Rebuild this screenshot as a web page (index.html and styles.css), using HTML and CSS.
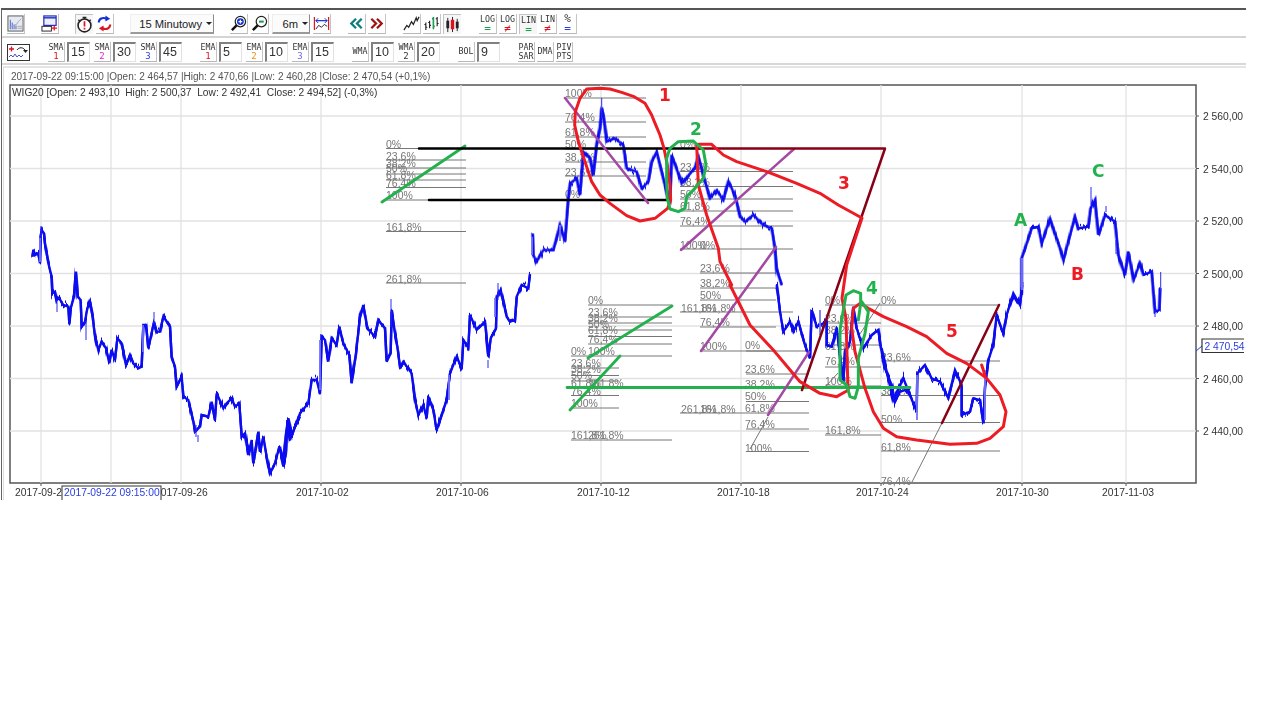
FILE: index.html
```html
<!DOCTYPE html>
<html lang="pl">
<head>
<meta charset="utf-8">
<title>WIG20</title>
<link rel="stylesheet" href="styles.css">
</head>
<body>
<div class="app">
  <div class="toolbar row1">
    <div class="grp">
      <div class="btn raised"><svg viewBox="0 0 18 18"><rect x="1" y="1" width="16" height="16" fill="#e8eaf2" stroke="#555"/><path d="M3 5h1v10H3zM5 8h1v7H5zM7 10h1v5H7zM9 11h1v4H9z" fill="#4a5fd0"/><path d="M3 13l4-2 3-1 2-3 3-3" fill="none" stroke="#9aa" stroke-width="1"/><path d="M11 12h5M11 14h5" stroke="#aaa"/></svg></div>
    </div>
    <div class="grp">
      <div class="btn raised"><svg viewBox="0 0 18 18"><rect x="3" y="1" width="13" height="10" fill="#eef" stroke="#2233bb" stroke-width="1.3"/><path d="M3 3h13" stroke="#2233bb" stroke-width="1.5"/><rect x="1" y="12" width="10" height="5" fill="#fff" stroke="#222"/><path d="M11 14h6M14 11.500v5" stroke="#e01020" stroke-width="1.300"/></svg></div>
    </div>
    <div class="grp wide">
      <div class="btn sunken"><svg viewBox="0 0 18 18"><circle cx="9" cy="10" r="6.800" fill="#fff" stroke="#222" stroke-width="1.700"/><path d="M7 1.500h4M9 1.500v2M2.500 4l2 2M15.500 4l-2 2" stroke="#222" stroke-width="1.500"/><path d="M9 5.500v5.500M9 12.500v1.700" stroke="#e01020" stroke-width="1.800"/></svg></div>
      <div class="btn raised"><svg viewBox="0 0 18 18"><path d="M3 8c0-4 4-6 8-4" fill="none" stroke="#1530d0" stroke-width="2.200"/><path d="M10 0.500l5 3.500-5 3z" fill="#1530d0"/><path d="M15 10c0 4-4 6-8 4" fill="none" stroke="#d81820" stroke-width="2.200"/><path d="M8 17.500l-5-3.500 5-3z" fill="#d81820"/></svg></div>
    </div>
    <div class="select long">15 Minutowy<span class="caret"></span></div>
    <div class="grp wide">
      <div class="btn raised"><svg viewBox="0 0 18 18"><circle cx="11" cy="7" r="5.500" fill="#fff" stroke="#222" stroke-width="1.300"/><circle cx="11" cy="7" r="3.600" fill="#1530d0"/><path d="M9 7h4M11 5v4" stroke="#fff" stroke-width="1.200"/><path d="M7 11l-5 5" stroke="#111" stroke-width="2.600"/></svg></div>
      <div class="btn raised"><svg viewBox="0 0 18 18"><circle cx="11" cy="7" r="5.500" fill="#fff" stroke="#222" stroke-width="1.300"/><path d="M8.500 7h5" stroke="#18a050" stroke-width="2.200"/><path d="M7 11l-5 5" stroke="#111" stroke-width="2.600"/></svg></div>
      <div class="select short">6m<span class="caret"></span></div>
      <div class="btn raised"><svg viewBox="0 0 18 18"><path d="M1.500 2v14M16.500 2v14" stroke="#d81820" stroke-width="1.300"/><path d="M3 6h12" stroke="#1530d0" stroke-width="1.300"/><path d="M5.500 3.500L3 6l2.500 2.500M12.500 3.500L15 6l-2.500 2.500" fill="none" stroke="#1530d0"/><path d="M3 15l3-4 3 2 3-3 3 2" fill="none" stroke="#222"/></svg></div>
    </div>
    <div class="grp shift">
      <div class="btn raised"><svg viewBox="0 0 18 18"><path d="M8.500 4l-5 5 5 5M14.500 4l-5 5 5 5" fill="none" stroke="#0b7d7d" stroke-width="2.400"/></svg></div>
      <div class="btn raised"><svg viewBox="0 0 18 18"><path d="M3.500 4l5 5-5 5M9.500 4l5 5-5 5" fill="none" stroke="#a01212" stroke-width="2.400"/></svg></div>
    </div>
    <div class="grp shift">
      <div class="btn raised"><svg viewBox="0 0 18 18"><path d="M1 16l3-5 2 2 3-6 2 3 3-7 1 3 2-4" fill="none" stroke="#222" stroke-width="1.300"/></svg></div>
      <div class="btn raised"><svg viewBox="0 0 18 18"><path d="M3 8v8M1.500 10h1.500M3 13h1.500M7 6v8M5.500 8h1.500M7 11h1.500M15 2v10M13.500 4h1.500M15 9h1.500" stroke="#222" stroke-width="1.200"/><path d="M11 2v13M9.500 4h1.500M11 12h1.500" stroke="#16a050" stroke-width="1.700"/></svg></div>
      <div class="btn sunken"><svg viewBox="0 0 18 18"><path d="M4 2v15M9 1v16M14 3v13" stroke="#222"/><rect x="2.500" y="5" width="3" height="8" fill="#222"/><rect x="7.200" y="4" width="3.600" height="10" fill="#e01020"/><rect x="12.500" y="6" width="3" height="7" fill="#222"/></svg></div>
    </div>
    <div class="grp shift2">
      <div class="btn raised txt"><span>LOG</span><b class="c-green">=</b></div>
      <div class="btn raised txt"><span>LOG</span><b class="c-red">≠</b></div>
      <div class="btn sunken txt"><span>LIN</span><b class="c-green">=</b></div>
      <div class="btn raised txt"><span>LIN</span><b class="c-red">≠</b></div>
      <div class="btn raised txt"><span class="pct">%</span><b class="c-blue">=</b></div>
    </div>
  </div>
  <div class="toolbar row2">
    <div class="btn raised tool"><svg viewBox="0 0 23 17"><rect x="0.500" y="0.500" width="22" height="16" fill="#fff" stroke="#333"/><path d="M2 13l2-2 2 2 2-3 2 3 2-2 2 2 2-2" fill="none" stroke="#4455cc"/><path d="M2 5h5M4.500 2.500v5" stroke="#e01020" stroke-width="1.300"/><path d="M10 6c2-3 6-3 8 0" fill="none" stroke="#222"/><path d="M16 6h5l-2.500 3z" fill="#222"/></svg></div>
    <div class="grp pairs">
      <div class="pair"><div class="btn raised ind"><span>SMA</span><b class="c-red">1</b></div><div class="input">15</div></div>
      <div class="pair"><div class="btn raised ind"><span>SMA</span><b class="c-magenta">2</b></div><div class="input">30</div></div>
      <div class="pair"><div class="btn raised ind"><span>SMA</span><b class="c-blue">3</b></div><div class="input">45</div></div>
    </div>
    <div class="grp pairs">
      <div class="pair"><div class="btn raised ind"><span>EMA</span><b class="c-red">1</b></div><div class="input">5</div></div>
      <div class="pair"><div class="btn raised ind"><span>EMA</span><b class="c-orange">2</b></div><div class="input">10</div></div>
      <div class="pair"><div class="btn raised ind"><span>EMA</span><b class="c-violet">3</b></div><div class="input">15</div></div>
    </div>
    <div class="grp pairs">
      <div class="pair"><div class="btn raised ind"><span>WMA</span></div><div class="input">10</div></div>
      <div class="pair"><div class="btn raised ind"><span>WMA</span><b class="c-dark">2</b></div><div class="input">20</div></div>
    </div>
    <div class="grp pairs">
      <div class="pair"><div class="btn raised ind"><span>BOL</span></div><div class="input">9</div></div>
    </div>
    <div class="grp">
      <div class="btn raised ind"><span>PAR</span><span>SAR</span></div>
      <div class="btn raised ind"><span>DMA</span></div>
      <div class="btn raised ind"><span>PIV</span><span>PTS</span></div>
    </div>
  </div>
  <div class="main">
    <div class="status">2017-09-22 09:15:00 |Open: 2 464,57 |High: 2 470,66 |Low: 2 460,28 |Close: 2 470,54 (+0,1%)</div>
    <svg class="chart" viewBox="4 84 1241 416">
      <defs>
        <filter id="rough" x="-2%" y="-5%" width="104%" height="110%" color-interpolation-filters="sRGB">
          <feTurbulence type="fractalNoise" baseFrequency="0.55 0.012" numOctaves="2" seed="7" result="noise"/>
          <feColorMatrix in="noise" type="matrix" values="0 0 0 0 .5  0 1 0 0 0  0 0 0 0 .5  0 0 0 0 1" result="shift"/>
          <feDisplacementMap in="SourceGraphic" in2="shift" scale="13" xChannelSelector="R" yChannelSelector="G" result="jag"/>
          <feMerge><feMergeNode in="jag"/><feMergeNode in="SourceGraphic"/></feMerge>
        </filter>
      </defs>
      <rect class="plot" x="10" y="85" width="1186" height="398"/>
      <path class="grid" d="M10 116H1196M10 168.500H1196M10 221H1196M10 273.500H1196M10 326H1196M10 378.500H1196M10 431H1196M41 85V483M111 85V483M181 85V483M321 85V483M461 85V483M601 85V483M741 85V483M881 85V483M1022 85V483M1126 85V483"/>
      <text class="legend" x="12" y="96">WIG20 [Open: 2 493,10  High: 2 500,37  Low: 2 492,41  Close: 2 494,52] (-0,3%)</text>

      <path class="fib" d="M386 148.500H466M386 160H466M386 168H466M386 174H466M386 180H466M386 187.500H466M386 200H466M386 231.500H466M386 283H466"/>
      <path class="fib" d="M565 98H646M565 122H646M565 137H646M565 149H646M565 162H646M565 176H646M565 200H646"/>
      <path class="fib" d="M680 171.500H793M680 186.500H793M680 199H793M680 211H793M680 226H793M680 249H793M680 312H793M680 413H809"/>
      <path class="fib" d="M700 273H776M700 288H776M700 300H776M700 327H776M700 351H776"/>
      <path class="fib" d="M746 351H809M746 374H809M746 388H809M746 401.500H809M746 429H809M746 451.500H809M750 449L768 417"/>
      <path class="fib" d="M588 305H672M588 317H672M588 323H672M588 330H672M588 336.500H672M588 344H672M571 356H672"/>
      <path class="fib" d="M571 368H619M571 375.500H619M571 381H619M571 395.500H619M571 408H619M571 440H672"/>
      <path class="fib" d="M825 305H881M825 323H881M825 345H881M825 367H881M825 386H881M825 435H881M826 386L838 373M858 337L880 303"/>
      <path class="fib" d="M881 305H1000M881 361H1000M881 395.500H1000M881 422.500H1000M881 451H1000M912 482L942 423"/>
      <g class="fib-label">
        <text x="386" y="148">0%</text><text x="386" y="160">23,6%</text><text x="386" y="167">38,2%</text><text x="386" y="172">50%</text><text x="386" y="179">61,8%</text><text x="386" y="187">76,4%</text><text x="386" y="199">100%</text><text x="386" y="231">161,8%</text><text x="386" y="283">261,8%</text>
        <text x="565" y="97">100%</text><text x="565" y="121">76,4%</text><text x="565" y="136">61,8%</text><text x="565" y="148">50%</text><text x="565" y="161">38,2%</text><text x="565" y="176">23,6%</text><text x="565" y="198">0%</text>
        <text x="680" y="148">0%</text><text x="680" y="171">23,6%</text><text x="680" y="186">38,2%</text><text x="680" y="198">50%</text><text x="680" y="210">61,8%</text><text x="680" y="225">76,4%</text><text x="680" y="249">100%</text><text x="700" y="249">0%</text><text x="681" y="312">161,8%</text><text x="700" y="312">161,8%</text><text x="681" y="413">261,8%</text><text x="700" y="413">161,8%</text>
        <text x="700" y="272">23,6%</text><text x="700" y="287">38,2%</text><text x="700" y="299">50%</text><text x="700" y="326">76,4%</text><text x="700" y="350">100%</text>
        <text x="745" y="349">0%</text><text x="745" y="373">23,6%</text><text x="745" y="388">38,2%</text><text x="745" y="400">50%</text><text x="745" y="412">61,8%</text><text x="745" y="428">76,4%</text><text x="745" y="452">100%</text>
        <text x="588" y="304">0%</text><text x="588" y="316">23,6%</text><text x="588" y="322">38,2%</text><text x="588" y="328">50%</text><text x="588" y="334">61,8%</text><text x="588" y="343">76,4%</text><text x="588" y="355">100%</text>
        <text x="571" y="355">0%</text><text x="571" y="367">23,6%</text><text x="571" y="373">38,2%</text><text x="571" y="379">50%</text><text x="571" y="387">61,8%</text><text x="588" y="387">161,8%</text><text x="571" y="395">76,4%</text><text x="571" y="407">100%</text><text x="571" y="439">161,8%</text><text x="588" y="439">261,8%</text>
        <text x="825" y="304">0%</text><text x="825" y="322">23,6%</text><text x="825" y="334">38,2%</text><text x="825" y="350">61,8%</text><text x="825" y="365">76,4%</text><text x="825" y="385">100%</text><text x="825" y="434">161,8%</text>
        <text x="881" y="304">0%</text><text x="881" y="361">23,6%</text><text x="881" y="395">38,2%</text><text x="881" y="423">50%</text><text x="881" y="451">61,8%</text><text x="881" y="485">76,4%</text>
      </g>

      <g class="price">
      <g class="series" transform="translate(0 200) scale(.33333)">
        <path d="M97 170L100 150 105 165 115 160 120 190 122 110 125 90 132 100 135 130 140 160 145 190 155 230 157 280 165 275 170 300 178 295 190 315 205 320 208 370 212 325 222 290 228 215 233 290 242 300 245 380 255 365 262 325 270 305 278 350 285 410 295 450 305 425 318 445 328 490 335 450 345 480 352 415 365 430 378 495 390 465 400 490 415 505 425 500 430 375 438 375 445 445 455 400 462 365 470 395 480 395 490 350 510 380 515 470 525 500 530 560 545 530 550 590 565 600 580 665 585 695 600 680 605 645 625 650 635 605 645 660 650 580 670 625 680 610 695 595 705 620 718 610 725 710 735 700 745 765 755 720 760 790 775 695 780 755 790 710 800 770 810 820 825 790 838 740 850 790 858 700 865 655 875 710 885 680 900 650"/>
      </g>
      <g class="series" transform="translate(280 240) scale(.33333)">
        <path d="M0 620L10 680 18 640 22 540 30 600 45 560 60 520 85 490 95 420 110 420 120 460 125 290 135 300 145 365 155 295 170 315 178 260 190 310 208 345 215 430 228 340 240 230 250 195 262 265 285 290 295 240 315 265 320 365 332 340 335 210 345 280 352 320 360 380 370 365 395 400 405 480 415 525 430 495 440 535 445 470 460 510 470 570 490 510 500 480 510 400 530 350 545 385 550 300 565 320 570 225 590 270 615 245 625 350 632 295 648 265 650 175 662 150 680 230 690 245 705 240 710 170 725 135 745 145 750 105"/>
      </g>
      <g class="series" transform="translate(370 85) scale(.33333)">
        <path d="M488 445L490 510 500 530 520 495 550 495 570 420 585 470 590 405 595 340 600 295 620 280 630 330 640 200 660 220 670 270 680 180 690 130 695 70 700 90 710 170 735 160 760 180 770 250 800 260 815 310 835 290 845 230 860 200 885 300 900 350 905 210 935 295 960 265 975 250 985 215 1005 290 1020 340 1040 315 1060 345 1075 290 1095 330 1110 395 1125 410 1150 390 1180 420 1205 430 1215 490 1220 555 1235 600"/>
      </g>
      <g class="series" transform="translate(560 285) scale(.33333)">
        <path d="M650 0L660 80 670 140 690 110 700 140 715 110 735 180 750 220 755 75 770 125 800 110 800 180 815 185 830 130 850 290 855 200 870 170 880 65 890 130 910 190 935 150 955 135 965 200 975 250 995 300 1005 350 1020 320 1050 310"/>
      </g>
      <g class="series" transform="translate(800 285) scale(.33333)">
        <path d="M245 190L260 260 280 345 310 280 330 330 350 380 352 265 375 240 395 280 420 290 445 340 465 255 485 300 485 390 510 380 520 340 540 345 550 415 555 310 565 225 580 180 590 90 610 145 620 90 640 25 660 60 667 0"/>
      </g>
      <g class="series" transform="translate(1000 85) scale(.33333)">
        <path d="M65 630L65 520 82 470 95 430 115 425 125 475 150 400 180 490 190 525 210 450 225 395 235 430 265 425 272 370 285 345 295 450 315 390 345 410 355 510 375 570 385 500 400 585 420 535 430 570 455 560 465 680 478 675 480 610"/>
      </g>
      </g>
      <path class="wick" d="M601.700 98V118M1091 187V205M1160.700 272V292M41 226V240M86 321V340M57 300V312M154 312V324M196 425V437M198 435V442M391 299V327M488 360V368M498 283V300M1106 206V212M1116 240V254M1155 310V317"/>
      <path class="hollow" d="M143 325V352M40 238V262M320 340V390M449 375V400M495 298V317M1022 258V290M820 310V335M917 375V420M985 370V420M560 225V241M532 237V255"/>

      <g class="sketch">
        <path class="green-line" d="M382 202L465 146M588 358L672 306M570 410L620 356M567 387.500H910"/>
        <path class="black-line" d="M419 148.500H700M429 200H670"/>
        <path class="purple-line" d="M565 98L648 203M681 250L794 149M701 351L776 247M768 415L809 352"/>
        <path class="maroon-line" d="M696 148.500H885L802 390M942 423L999 305"/>
      </g>
      <g class="sketch" transform="translate(370 85) scale(.33333)">
        <path class="red-curve" d="M650 12L690 10 720 12 755 22 790 34 825 55 845 90 853 110 870 150 882 190 892 240 900 300 902 345 893 370 855 400 810 408 770 392 720 355 690 330 665 290 645 230 625 170 614 120 616 80 630 40Z"/>
        <path class="red-curve" d="M985 178H1025L1060 210 1100 230 1190 260 1280 295 1350 325 1405 360 1476 399 1430 540 1416 640 1428 700 1434 915"/>
        <path class="red-curve" d="M980 180L985 300 1010 390 1045 490 1050 530 1085 600"/>
        <path class="green-curve" d="M925 170L970 168 1000 195 1008 240 1000 280 975 310 950 335 945 370 925 380 900 372 892 340 890 290 890 220 900 190Z"/>
      </g>
      <g class="sketch" transform="translate(560 285) scale(.33333)">
        <path class="red-curve" d="M510 0L570 120 640 195 720 290 780 325 830 335 860 318"/>
      </g>
      <g class="sketch" transform="translate(800 285) scale(.33333)">
        <path class="red-curve" d="M160 70L180 55 205 70 250 95 320 125 380 155 440 205 500 235 560 280 600 330 618 380 610 425 570 460 530 475 450 478 350 465 290 455 250 430 220 380 195 310 165 200 155 130ZM545 240L555 270"/>
      </g>
      <g class="sketch" transform="translate(790 270) scale(.33333)">
        <path class="green-curve" d="M215 95L235 125 225 190 205 265 205 350 195 385 180 380 170 345 150 330 150 180 160 120 168 75 190 62 212 70 212 100 205 150"/>
      </g>
      <g class="mark">
        <text class="c-red" x="659" y="101">1</text>
        <text class="c-green" x="690" y="135">2</text>
        <text class="c-red" x="838" y="189">3</text>
        <text class="c-green" x="866" y="294">4</text>
        <text class="c-red" x="946" y="337">5</text>
        <text class="c-green" x="1014" y="226">A</text>
        <text class="c-red" x="1071" y="280">B</text>
        <text class="c-green" x="1092" y="177">C</text>
      </g>

      <path class="tick" d="M1196 116h3M1196 168.500h3M1196 221h3M1196 273.500h3M1196 326h3M1196 378.500h3M1196 431h3M41 483v3M321 483v3M461 483v3M601 483v3M741 483v3M881 483v3M1022 483v3M1126 483v3"/>
      <g class="axis">
        <text x="1203" y="120">2 560,00</text><text x="1203" y="172.500">2 540,00</text><text x="1203" y="225">2 520,00</text><text x="1203" y="277.500">2 500,00</text><text x="1203" y="330">2 480,00</text><text x="1203" y="382.500">2 460,00</text><text x="1203" y="435">2 440,00</text>
        <text x="15" y="496">2017-09-25</text><text x="155" y="496">2017-09-26</text><text x="296" y="496">2017-10-02</text><text x="436" y="496">2017-10-06</text><text x="577" y="496">2017-10-12</text><text x="717" y="496">2017-10-18</text><text x="856" y="496">2017-10-24</text><text x="996" y="496">2017-10-30</text><text x="1102" y="496">2017-11-03</text>
      </g>
      <rect class="tip" x="62" y="486" width="99" height="16"/>
      <text class="tip-text" x="64" y="496">2017-09-22 09:15:00</text>
      <path class="cursor" d="M1196 351L1202 346"/>
      <path class="price-box" d="M1244 339H1202V352.500H1244"/>
      <text class="tip-text" x="1204.500" y="350">2 470,54</text>
    </svg>
  </div>
</div>
</body>
</html>
```
FILE: styles.css
```css
html, body {
  margin: 0;
  padding: 0;
  background: #fff;
}
body {
  height: 720px;
  overflow: hidden;
  font-family: "Liberation Sans", Arial, sans-serif;
  color: #333;
}
.app {
  width: 1244px;
  margin-top: 8px;
  margin-left: 1px;
  height: 490px;
  border-top: 2px solid #555;
  border-left: 1px solid #666;
  filter: blur(.3px);
  overflow: hidden;
}
.toolbar {
  display: flex;
  align-items: center;
  gap: 16px;
  padding-left: 5px;
  box-sizing: border-box;
}
.row1 {
  border-bottom: 2px solid #d4d4d4;
  height: 28px;
  padding-top: 2px;
}
.row2 {
  gap: 18px;
  height: 27px;
  padding-top: 3px;
  border-bottom: 2px solid #d8d8d8;
}
.grp {
  display: flex;
  align-items: center;
  gap: 2px;
}
.grp.wide { gap: 3px; }
.grp.shift { margin-left: 1px; }
.grp.shift2 { margin-left: 2px; }
.pairs { gap: 4px; }
.pair {
  display: flex;
  align-items: center;
  gap: 2px;
}
.btn {
  width: 18px;
  height: 20px;
  box-sizing: border-box;
  display: flex;
  flex-direction: column;
  align-items: center;
  justify-content: center;
  background: #fff;
}
.btn svg { width: 17px; height: 17px; display: block; }
.raised {
  border-right: 1px solid #c4c4c4;
  border-bottom: 1px solid #b8b8b8;
}
.sunken {
  border-top: 1px solid #c4c4c4;
  border-left: 1px solid #c4c4c4;
  background: #f6f6f6;
}
.tool { width: 23px; height: 18px; border: 0; }
.tool svg { width: 23px; height: 17px; }
.select {
  box-sizing: border-box;
  height: 20px;
  display: flex;
  align-items: center;
  justify-content: flex-end;
  gap: 4px;
  padding-right: 1px;
  font-size: 11.200px;
  color: #222;
  background: #fbfbfb;
  border-right: 1px solid #8a8a8a;
  border-bottom: 2px solid #9a9a9a;
  border-top: 1px solid #eee;
  border-left: 1px solid #eee;
}
.select.long { width: 84px; }
.select.short { width: 38px; }
.caret {
  width: 0;
  height: 0;
  border-left: 3px solid transparent;
  border-right: 3px solid transparent;
  border-top: 3px solid #222;
}
.txt, .ind {
  font-family: "DejaVu Sans Mono", monospace;
  font-size: 8.300px;
  line-height: 9px;
  color: #333;
}
.ind { width: 17px; }
.txt span, .ind span { display: block; }
.txt b, .ind b { display: block; font-weight: normal; font-size: 9px; }
.txt b { font-size: 11px; line-height: 9px; }
.pct { font-size: 11px; line-height: 10px; }
.input {
  box-sizing: border-box;
  width: 23px;
  height: 20px;
  border-top: 2px solid #808080;
  border-left: 2px solid #808080;
  border-right: 1px solid #e2e2e2;
  border-bottom: 1px solid #e2e2e2;
  padding-left: 2px;
  font-size: 12.500px;
  line-height: 17px;
  color: #333;
  background: #fff;
}
.c-red { color: #e01020; fill: #ed1c24; }
.c-green { color: #16a34a; fill: #22b14c; }
.c-blue { color: #2a3ee0; }
.c-magenta { color: #e020d0; }
.c-orange { color: #f08a10; }
.c-violet { color: #6a6af0; }
.c-dark { color: #333; }
.main {
  border-left: 1px solid #ddd;
  margin-left: 1px;
  border-top: 2px solid #e4e4e4;
  margin-top: 1px;
}
.status {
  height: 16px;
  padding-left: 7px;
  padding-top: 1px;
  box-sizing: border-box;
  font-size: 10px;
  line-height: 15px;
  color: #555;
  white-space: nowrap;
}
.chart {
  display: block;
  width: 1241px;
  height: 416px;
}
.plot { fill: #fff; stroke: #555; stroke-width: 1.500; }
.grid { fill: none; stroke: #e2e2e2; stroke-width: 1.300; }
.legend { font-size: 10.200px; fill: #333; white-space: pre; }
.fib { fill: none; stroke: #777; stroke-width: 1; }
.fib-label text { font-size: 10.500px; fill: #777; }
.price { filter: url(#rough); }
.series path {
  fill: none;
  stroke: #0c0cf0;
  stroke-width: 2.400;
  stroke-linejoin: miter;
  vector-effect: non-scaling-stroke;
}
.wick { fill: none; stroke: #2a2af5; stroke-width: 1; }
.hollow { fill: none; stroke: #7474f5; stroke-width: 1.800; }
.sketch path {
  fill: none;
  vector-effect: non-scaling-stroke;
  stroke-linejoin: round;
  stroke-linecap: round;
}
.green-line { stroke: #22b14c; stroke-width: 2.800; }
.black-line { stroke: #000; stroke-width: 2.500; }
.purple-line { stroke: #a349a4; stroke-width: 2.500; }
.maroon-line { stroke: #880015; stroke-width: 2.500; }
.red-curve { stroke: #ed1c24; stroke-width: 3; }
.green-curve { stroke: #22b14c; stroke-width: 3; }
.mark text {
  font-size: 17px;
  font-weight: bold;
  font-family: "DejaVu Sans", sans-serif;
}
.tick { fill: none; stroke: #555; stroke-width: 1; }
.axis text { font-size: 10.300px; fill: #333; }
.tip { fill: #fff; stroke: #333; stroke-width: 1; }
.tip-text { font-size: 10.300px; fill: #2a3ee0; }
.cursor { fill: none; stroke: #2a3ee0; stroke-width: 1; }
.price-box { fill: #fff; stroke: #333; stroke-width: 1.200; }
```
